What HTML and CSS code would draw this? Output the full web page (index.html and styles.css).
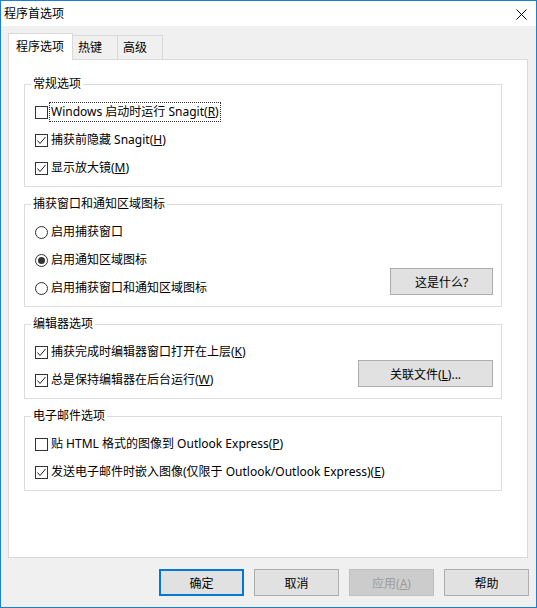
FILE: index.html
```html
<!DOCTYPE html>
<html lang="zh-CN">
<head>
    <meta charset="UTF-8">
    <title>程序首选项</title>
    <link rel="stylesheet" href="styles.css">
</head>
<body>
    <div class="window">
        <div class="titlebar">
            <span class="title">程序首选项</span>
            <svg class="close" width="11" height="11" viewBox="0 0 11 11">
                <path d="M0.5 0.5 L10.5 10.5 M10.5 0.5 L0.5 10.5" stroke="#000" stroke-width="1" fill="none"/>
            </svg>
        </div>

        <div class="tabs">
            <div class="tab active">程序选项</div>
            <div class="tab">热键</div>
            <div class="tab">高级</div>
        </div>

        <div class="panel">
            <fieldset class="group">
                <legend>常规选项</legend>
                <div class="row">
                    <svg class="box" width="13" height="13" viewBox="0 0 13 13"><rect x="0.5" y="0.5" width="12" height="12" fill="#fff" stroke="#333"/></svg>
                    <span class="focus">Windows 启动时运行 Snagit(<u>R</u>)</span>
                </div>
                <div class="row">
                    <svg class="box" width="13" height="13" viewBox="0 0 13 13"><rect x="0.5" y="0.5" width="12" height="12" fill="#fff" stroke="#333"/><path d="M2.5 6.5 L5 9.5 L10.5 3" stroke="#222" fill="none"/></svg>
                    <span>捕获前隐藏 Snagit(<u>H</u>)</span>
                </div>
                <div class="row">
                    <svg class="box" width="13" height="13" viewBox="0 0 13 13"><rect x="0.5" y="0.5" width="12" height="12" fill="#fff" stroke="#333"/><path d="M2.5 6.5 L5 9.5 L10.5 3" stroke="#222" fill="none"/></svg>
                    <span>显示放大镜(<u>M</u>)</span>
                </div>
            </fieldset>

            <fieldset class="group">
                <legend>捕获窗口和通知区域图标</legend>
                <div class="group-body">
                    <div class="options">
                        <div class="row">
                            <svg class="box" width="13" height="13" viewBox="0 0 13 13"><circle cx="6.5" cy="6.5" r="6" fill="#fff" stroke="#333"/></svg>
                            <span>启用捕获窗口</span>
                        </div>
                        <div class="row">
                            <svg class="box" width="13" height="13" viewBox="0 0 13 13"><circle cx="6.5" cy="6.5" r="6" fill="#fff" stroke="#333"/><circle cx="6.5" cy="6.5" r="3.5" fill="#333"/></svg>
                            <span>启用通知区域图标</span>
                        </div>
                        <div class="row">
                            <svg class="box" width="13" height="13" viewBox="0 0 13 13"><circle cx="6.5" cy="6.5" r="6" fill="#fff" stroke="#333"/></svg>
                            <span>启用捕获窗口和通知区域图标</span>
                        </div>
                    </div>
                    <button class="btn btn-what">这是什么?</button>
                </div>
            </fieldset>

            <fieldset class="group">
                <legend>编辑器选项</legend>
                <div class="group-body">
                    <div class="options">
                        <div class="row">
                            <svg class="box" width="13" height="13" viewBox="0 0 13 13"><rect x="0.5" y="0.5" width="12" height="12" fill="#fff" stroke="#333"/><path d="M2.5 6.5 L5 9.5 L10.5 3" stroke="#222" fill="none"/></svg>
                            <span>捕获完成时编辑器窗口打开在上层(<u>K</u>)</span>
                        </div>
                        <div class="row">
                            <svg class="box" width="13" height="13" viewBox="0 0 13 13"><rect x="0.5" y="0.5" width="12" height="12" fill="#fff" stroke="#333"/><path d="M2.5 6.5 L5 9.5 L10.5 3" stroke="#222" fill="none"/></svg>
                            <span>总是保持编辑器在后台运行(<u>W</u>)</span>
                        </div>
                    </div>
                    <button class="btn btn-assoc">关联文件(<u>L</u>)...</button>
                </div>
            </fieldset>

            <fieldset class="group">
                <legend>电子邮件选项</legend>
                <div class="row">
                    <svg class="box" width="13" height="13" viewBox="0 0 13 13"><rect x="0.5" y="0.5" width="12" height="12" fill="#fff" stroke="#333"/></svg>
                    <span>贴 HTML 格式的图像到 Outlook Express(<u>P</u>)</span>
                </div>
                <div class="row">
                    <svg class="box" width="13" height="13" viewBox="0 0 13 13"><rect x="0.5" y="0.5" width="12" height="12" fill="#fff" stroke="#333"/><path d="M2.5 6.5 L5 9.5 L10.5 3" stroke="#222" fill="none"/></svg>
                    <span>发送电子邮件时嵌入图像(仅限于 Outlook/Outlook Express)(<u>E</u>)</span>
                </div>
            </fieldset>
        </div>

        <div class="actions">
            <button class="btn btn-footer default">确定</button>
            <button class="btn btn-footer">取消</button>
            <button class="btn btn-footer" disabled>应用(<u>A</u>)</button>
            <button class="btn btn-footer">帮助</button>
        </div>
    </div>
</body>
</html>
```

FILE: styles.css
```css
body {
    margin: 0;
    font-family: "Noto Sans", "Noto Sans CJK SC", sans-serif;
    font-size: 12px;
    color: #000;
    background: #fff;
}

.window {
    width: 537px;
    height: 608px;
    box-sizing: border-box;
    border: 1px solid #1e7fd2;
    background: #f0f0f0;
    display: flex;
    flex-direction: column;
}

.titlebar {
    height: 25px;
    background: #fff;
    display: flex;
    align-items: center;
    justify-content: space-between;
    padding-left: 3px;
    flex-shrink: 0;
}

.title {
    font-size: 12px;
    line-height: 16px;
}

.close {
    margin-right: 9px;
    margin-top: 1px;
}

.tabs {
    display: flex;
    align-items: flex-end;
    margin-top: 7px;
    padding-left: 7px;
    height: 26px;
    flex-shrink: 0;
}

.tab {
    height: 24px;
    box-sizing: border-box;
    border: 1px solid #d9d9d9;
    border-bottom: none;
    background: #f0f0f0;
    padding: 0 15px 0 5px;
    margin-left: -1px;
    display: flex;
    align-items: center;
    line-height: 16px;
}

.tab.active {
    height: 27px;
    margin-left: 0;
    margin-bottom: -1px;
    padding: 0 8px 0 7px;
    background: #fff;
    position: relative;
    z-index: 1;
}

.panel {
    flex: 1;
    margin: 0 8px 0 7px;
    background: #fff;
    border: 1px solid #d9d9d9;
    padding: 16px 25px 0 15px;
}

.group {
    margin: 0 0 9px;
    border: 1px solid #dcdcdc;
    padding: 6px 8px 4px 10px;
}

.group legend {
    padding: 0 2px;
    margin-left: -4px;
    line-height: 16px;
}

.row {
    height: 28px;
    display: flex;
    align-items: center;
    gap: 3px;
    white-space: nowrap;
    line-height: 16px;
}

.box {
    flex-shrink: 0;
}

.focus {
    outline: 1px dotted #333;
    outline-offset: 1px;
}

.group-body {
    display: flex;
    align-items: flex-end;
}

.options {
    flex: 1;
}

.btn {
    font-family: inherit;
    font-size: 12px;
    color: #000;
    background: #e1e1e1;
    border: 1px solid #adadad;
    height: 27px;
    padding: 0;
}

.btn-what {
    width: 103px;
    margin-bottom: 7px;
}

.btn-assoc {
    width: 135px;
    margin-bottom: 7px;
}

.actions {
    display: flex;
    justify-content: flex-end;
    gap: 10px;
    padding: 11px 7px 11px 0;
    flex-shrink: 0;
}

.btn-footer {
    width: 85px;
}

.btn-footer.default {
    border: 2px solid #0078d7;
}

.btn-footer:disabled {
    background: #cccccc;
    border-color: #bfbfbf;
    color: #9d9d9d;
}
```
